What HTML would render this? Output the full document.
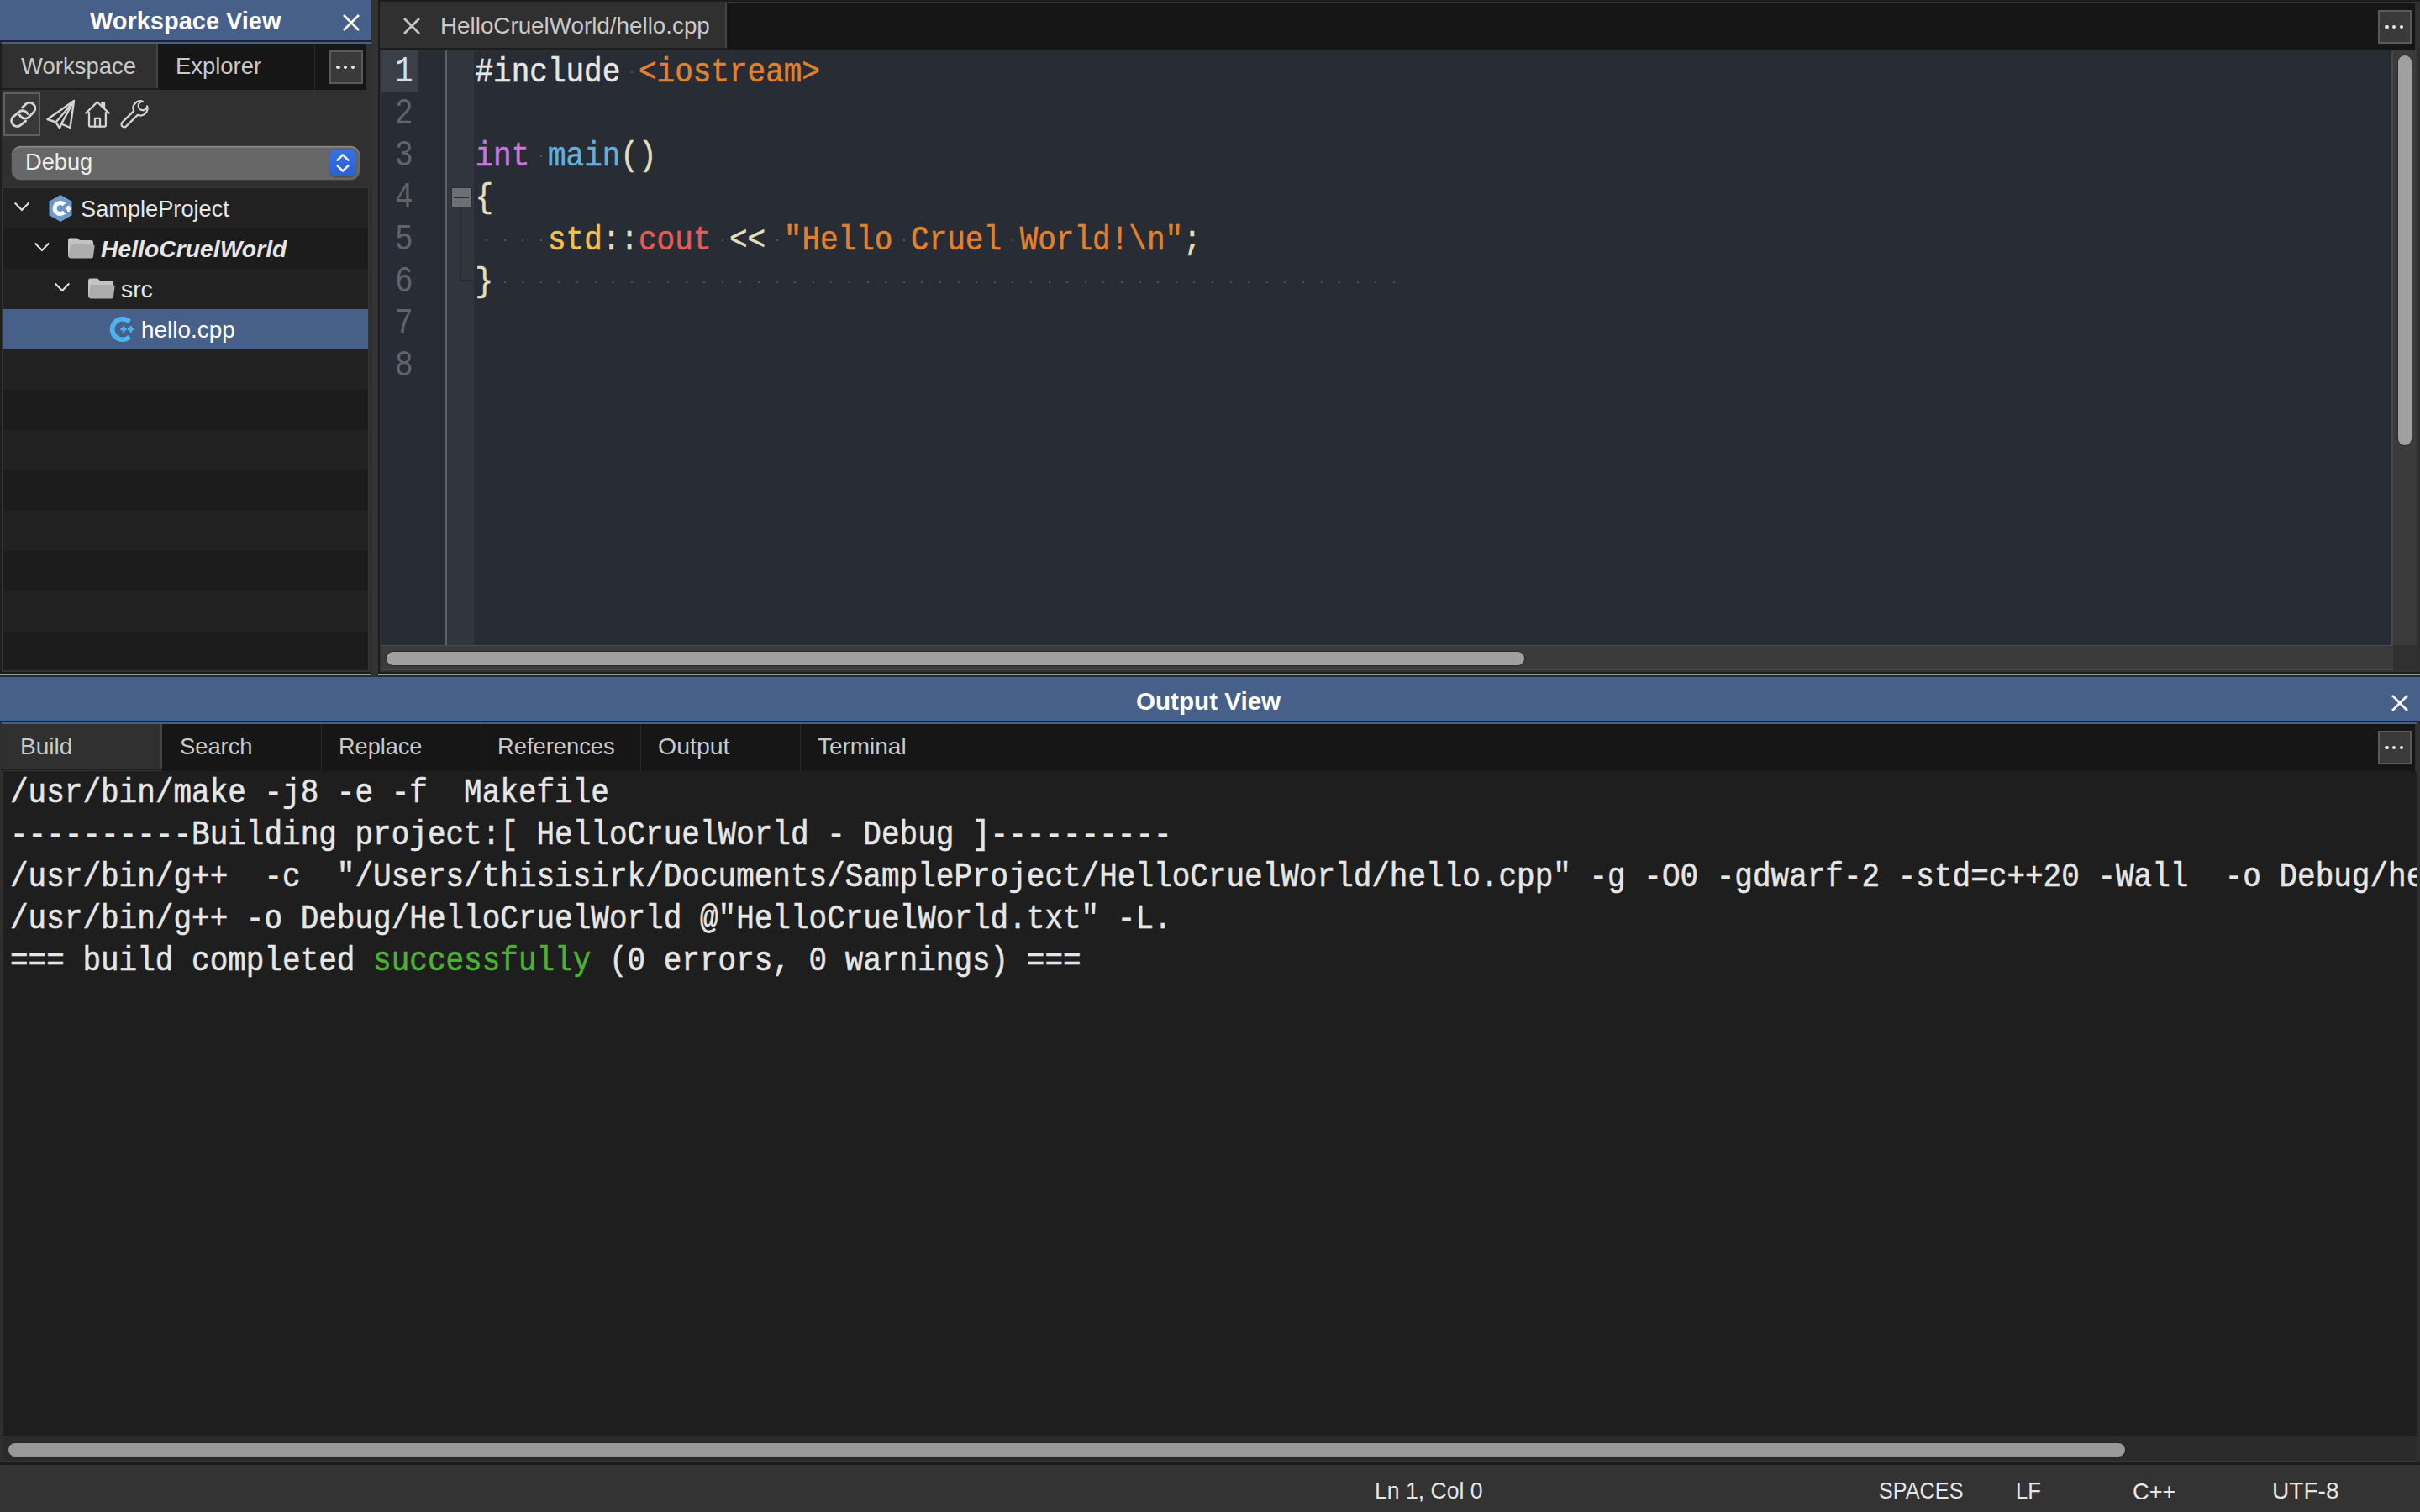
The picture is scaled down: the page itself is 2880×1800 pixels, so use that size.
<!DOCTYPE html>
<html><head><meta charset="utf-8">
<style>
*{margin:0;padding:0;box-sizing:border-box}
html,body{width:2880px;height:1800px;overflow:hidden;background:#2f2f2f;font-family:"Liberation Sans",sans-serif}
.a{position:absolute}
.ui{font-family:"Liberation Sans",sans-serif;white-space:pre;line-height:1}
.mono{font-family:"Liberation Mono",monospace;white-space:pre}
.mono>div{transform:scaleY(1.15);transform-origin:0 34px;-webkit-text-stroke:0.5px currentColor}
.lnum{transform:scaleY(1.24);transform-origin:0 34px}
.hdr{background:#46608a}
.title{color:#fff;font-weight:bold;font-size:29.5px}
.tabtxt{color:#c9c9c9;font-size:26.5px}
.more{background:#3a3a3a;border:2px solid #5a5a5a}
.more i{position:absolute;top:15.8px;width:4.6px;height:4.6px;border-radius:50%;background:#e8e8e8}
</style></head><body>

<!-- ============ LEFT PANE ============ -->
<div class="a" style="left:0;top:0;width:442px;height:802px;background:#303030"></div>
<div class="a hdr" style="left:0;top:0;width:442px;height:48px"></div>
<div class="a ui title" id="t_wsview" style="font-size:30px;left:107.0px;top:9.9px;transform:scaleX(0.9653);transform-origin:0 0">Workspace View</div>
<svg class="a" style="left:406px;top:15px" width="24" height="24"><path d="M3 3L21 21M21 3L3 21" stroke="#fff" stroke-width="2.6"/></svg>
<div class="a" style="left:0;top:48px;width:442px;height:2px;background:#1b2333"></div>
<div class="a" style="left:2px;top:50px;width:440px;height:2px;background:#46608a"></div>
<div class="a" style="left:0;top:52px;width:2px;height:750px;background:#1e1e1e"></div>
<!-- tabs -->
<div class="a" style="left:2px;top:52px;width:434px;height:55px;background:#161616"></div>
<div class="a" style="left:2px;top:52px;width:186px;height:53px;background:#303030;border-right:2px solid #444"></div>
<div class="a" style="left:4px;top:105px;width:186px;height:2px;background:#1e1e1e"></div>
<div class="a ui tabtxt" id="t_wstab" style="font-size:28px;left:24.5px;top:65.0px;transform:scaleX(0.9819);transform-origin:0 0">Workspace</div>
<div class="a ui tabtxt" id="t_explorer" style="font-size:28px;left:209.0px;top:65.0px;transform:scaleX(0.9797);transform-origin:0 0">Explorer</div>
<div class="a" style="left:374px;top:52px;width:1px;height:55px;background:#2a2a2a"></div>
<div class="a more" style="left:392px;top:60px;width:40px;height:40px"><i style="left:6px"></i><i style="left:14.8px"></i><i style="left:23.7px"></i></div>
<!-- toolbar -->
<div class="a" style="left:4px;top:110px;width:44px;height:52px;background:#383838;border:2px solid #5f5f5f"></div>
<svg class="a" style="left:8px;top:116px" width="180" height="40" viewBox="0 0 180 40" fill="none" stroke="#d4d4d4" stroke-width="2.4" stroke-linecap="round" stroke-linejoin="round">
<!-- link -->
<g transform="translate(-8,-16) scale(0.046296)" stroke-width="62">
<path d="M577 604L668 513A145 145 0 0 1 872 717L742 847A145 145 0 0 1 505 797"/>
<path d="M660 951L532 1057A145 145 0 0 1 328 853L478 728A145 145 0 0 1 710 765"/>
</g>
<!-- paper plane -->
<g transform="translate(48,4)">
<path d="M32 0L0.5 22L10.5 25.5L15 32.5L17 27.5L27.5 32Z"/>
<path d="M31.5 1L10.5 25.5M31.5 1L17 27.5"/>
</g>
<!-- house -->
<g transform="translate(93,4)" stroke-width="2.3">
<path d="M1.3 14.6L14.8 1.5L28.6 14.6"/>
<path d="M5 14.2V28.7A2 2 0 0 0 7 30.7H22.9A2 2 0 0 0 24.9 28.7V14.2"/>
<path d="M12 30.7V20.8H18V30.7"/>
<path d="M20.4 4.8V2.1H23V7.5"/>
</g>
<!-- wrench -->
<g transform="translate(137,4)" stroke-width="2.2">
<path d="M14.2 12.15A8.5 8.5 0 0 1 24.9 0.8A5.2 5.2 0 1 0 30.1 6.4A8.5 8.5 0 0 1 18.8 16.85L5.1 30.35A3.3 3.3 0 0 1 0.5 25.6Z"/>
</g>
</svg>

<!-- combo -->
<div class="a" style="left:14px;top:174px;width:414px;height:40px;border-radius:11px;background:#676767;box-shadow:inset 0 1.5px 0 #8a8a8a,0 0 0 0.5px #4a4a4a"></div>
<div class="a ui" id="t_debug" style="font-size:28px;left:29.7px;top:179.4px;color:#ececec;transform:scaleX(0.9723);transform-origin:0 0">Debug</div>
<div class="a" style="left:392px;top:178px;width:32px;height:32px;border-radius:8px;background:linear-gradient(#3672e6,#2b60cf);box-shadow:0 0.5px 1.5px rgba(0,0,0,0.35)"></div>
<svg class="a" style="left:392px;top:178px" width="32" height="32"><path d="M9.6 12.6L16 6.4L22.4 12.6M9.6 19.4L16 25.6L22.4 19.4" fill="none" stroke="#eef2ff" stroke-width="2.6" stroke-linecap="round" stroke-linejoin="round"/></svg>

<!-- tree -->
<div class="a" style="left:2px;top:222px;width:440px;height:580px;background:#2b2b2b"></div>
<div class="a" style="left:2px;top:222px;width:438px;height:578px;background:#333"></div>
<div class="a" id="tree" style="left:4px;top:224px;width:434px;height:574px;background:#1d1d1d;overflow:hidden">
<div class="a" style="left:0;top:0;width:434px;height:48px;background:#212121"></div>
<div class="a" style="left:0;top:48px;width:434px;height:48px;background:#1c1c1c"></div>
<div class="a" style="left:0;top:96px;width:434px;height:48px;background:#212121"></div>
<div class="a" style="left:0;top:144px;width:434px;height:48px;background:#46608a"></div>
<div class="a" style="left:0;top:192px;width:434px;height:48px;background:#212121"></div>
<div class="a" style="left:0;top:240px;width:434px;height:48px;background:#1c1c1c"></div>
<div class="a" style="left:0;top:288px;width:434px;height:48px;background:#212121"></div>
<div class="a" style="left:0;top:336px;width:434px;height:48px;background:#1c1c1c"></div>
<div class="a" style="left:0;top:384px;width:434px;height:48px;background:#212121"></div>
<div class="a" style="left:0;top:432px;width:434px;height:48px;background:#1c1c1c"></div>
<div class="a" style="left:0;top:480px;width:434px;height:48px;background:#212121"></div>
<div class="a" style="left:0;top:528px;width:434px;height:48px;background:#1c1c1c"></div>
<!-- row0 SampleProject -->
<svg class="a" style="left:11px;top:15px" width="22" height="14"><path d="M2.7 2.5L11 11L19.3 2.5" fill="none" stroke="#e0e0e0" stroke-width="2.1"/></svg>
<svg class="a" style="left:53px;top:7px" width="30" height="34" viewBox="0 0 30 34">
<path d="M15 1L28.5 8.8V25.2L15 33L1.5 25.2V8.8Z" fill="#6f9bd3"/>
<path d="M1.5 25.2L28.5 8.8" stroke="#5a86be" stroke-width="0.8"/>
<path d="M1.5 8.8L28.5 25.2" stroke="#5a86be" stroke-width="0.8"/>
<path d="M19.5 12.5A6.6 6.6 0 1 0 19.5 21.5" fill="none" stroke="#fff" stroke-width="5"/>
<path d="M24.5 14V21M21 17.5H28" stroke="#fff" stroke-width="2.6"/>
</svg>
<div class="a ui" id="t_sample" style="font-size:28px;left:92.3px;top:11.4px;color:#e6e6e6;transform:scaleX(0.9713);transform-origin:0 0">SampleProject</div>
<!-- row1 HelloCruelWorld -->
<svg class="a" style="left:35px;top:63px" width="22" height="14"><path d="M2.7 2.5L11 11L19.3 2.5" fill="none" stroke="#e0e0e0" stroke-width="2.1"/></svg>
<svg class="a" style="left:76px;top:59px" width="33" height="26" viewBox="0 0 33 26">
<path d="M3 0.5H12L15 3H28A3 3 0 0 1 31 6V21A3 3 0 0 1 28 24H4A3 3 0 0 1 1 21V3A2.5 2.5 0 0 1 3 0.5Z" fill="#c4c4c4"/>
<path d="M6 8H30A2.5 2.5 0 0 1 32.5 10.8L31 22A2.5 2.5 0 0 1 28.5 24.5H4A2.5 2.5 0 0 1 1.6 22L3.5 10.5A2.5 2.5 0 0 1 6 8Z" fill="#adadad"/>
</svg>
<div class="a ui" id="t_hcw" style="font-size:28.5px;left:115.8px;top:58.4px;color:#e6e6e6;font-weight:bold;font-style:italic;transform:scaleX(0.9937);transform-origin:0 0">HelloCruelWorld</div>
<!-- row2 src -->
<svg class="a" style="left:59px;top:111px" width="22" height="14"><path d="M2.7 2.5L11 11L19.3 2.5" fill="none" stroke="#e0e0e0" stroke-width="2.1"/></svg>
<svg class="a" style="left:100px;top:107px" width="33" height="26" viewBox="0 0 33 26">
<path d="M3 0.5H12L15 3H28A3 3 0 0 1 31 6V21A3 3 0 0 1 28 24H4A3 3 0 0 1 1 21V3A2.5 2.5 0 0 1 3 0.5Z" fill="#c4c4c4"/>
<path d="M6 8H30A2.5 2.5 0 0 1 32.5 10.8L31 22A2.5 2.5 0 0 1 28.5 24.5H4A2.5 2.5 0 0 1 1.6 22L3.5 10.5A2.5 2.5 0 0 1 6 8Z" fill="#adadad"/>
</svg>
<div class="a ui" id="t_src" style="font-size:28px;left:140.0px;top:107.4px;color:#e6e6e6;transform:scaleX(1.0123);transform-origin:0 0">src</div>
<!-- row3 hello.cpp -->
<svg class="a" style="left:126px;top:152px;overflow:visible" width="32" height="32" viewBox="0 0 32 32">
<path d="M24.25 7.04A12.25 12.25 0 1 0 24.25 24.96" fill="none" stroke="#4fb3ee" stroke-width="5.7"/>
<path d="M13.4 16H20.9M17.15 12.25V19.75M22.05 16H29.55M25.8 12.25V19.75" stroke="#4fb3ee" stroke-width="2.6"/>
</svg>
<div class="a ui" id="t_hello" style="font-size:28px;left:163.6px;top:155.4px;color:#ffffff;transform:scaleX(0.9972);transform-origin:0 0">hello.cpp</div>
</div>
<div class="a" style="left:0;top:800px;width:442px;height:2px;background:#1c1c1c"></div>
<div class="a" style="left:0;top:802px;width:442px;height:2px;background:#9a9a9a"></div>

<!-- ============ EDITOR PANE ============ -->
<div class="a" style="left:442px;top:0;width:8px;height:802px;background:#333"></div>
<div class="a" style="left:450px;top:0;width:2430px;height:802px;background:#1c1c1c"></div>
<div class="a" style="left:452px;top:2px;width:2428px;height:798px;background:#333"></div>
<div class="a" style="left:452px;top:4px;width:2422px;height:56px;background:#161616"></div>
<div class="a" style="left:452px;top:2px;width:2428px;height:2px;background:#333"></div>
<div class="a" style="left:452px;top:3px;width:413px;height:54px;background:#303030;border-right:2px solid #444"></div>
<div class="a" style="left:454px;top:57px;width:411px;height:2px;background:#1e1e1e"></div>
<svg class="a" style="left:478px;top:19px" width="24" height="24"><path d="M3 3L21 21M21 3L3 21" stroke="#c4c4c4" stroke-width="2.8"/></svg>
<div class="a ui tabtxt" id="t_edtab" style="font-size:28px;left:523.8px;top:16.7px;transform:scaleX(0.9926);transform-origin:0 0">HelloCruelWorld/hello.cpp</div>
<div class="a more" style="left:2830px;top:12px;width:40px;height:40px"><i style="left:6px"></i><i style="left:14.8px"></i><i style="left:23.7px"></i></div>
<div class="a" style="left:2874px;top:4px;width:6px;height:798px;background:#2f2f2f"></div>

<!-- editor body -->
<div class="a" style="left:454px;top:60px;width:2392px;height:708px;background:#282c34"></div>
<div class="a" style="left:454px;top:60px;width:44px;height:50px;background:#3b3f48"></div>
<div class="a" style="left:530px;top:60px;width:2px;height:708px;background:#5b5f67"></div>
<div class="a" style="left:532px;top:60px;width:32px;height:708px;background:#31353d"></div>
<div id="code"><div class="a mono" style="left:565.5px;top:63px;font-size:36px;line-height:50px"><div style="height:50px"><span style="color:#e6e6e6">#include </span><span style="color:#e0812f">&lt;iostream&gt;</span></div><div style="height:50px"></div><div style="height:50px"><span style="color:#c678dd">int </span><span style="color:#64afd9">main</span><span style="color:#e5dfb8">()</span></div><div style="height:50px"><span style="color:#e5dfb8">{</span></div><div style="height:50px"><span style="color:#e6e6e6">    </span><span style="color:#f3c04f">std</span><span style="color:#e5dfb8">::</span><span style="color:#e45c57">cout</span><span style="color:#e6e6e6"> </span><span style="color:#e5dfb8">&lt;&lt;</span><span style="color:#e6e6e6"> </span><span style="color:#e0812f">"Hello Cruel World!\n"</span><span style="color:#e5dfb8">;</span></div><div style="height:50px"><span style="color:#e5dfb8">}</span></div><div style="height:50px"></div><div style="height:50px"></div>
</div>
<i class="a" style="left:750.8px;top:85px;width:2px;height:2px;background:#50545c"></i><i class="a" style="left:642.8px;top:185px;width:2px;height:2px;background:#50545c"></i><i class="a" style="left:578.0px;top:285px;width:2px;height:2px;background:#50545c"></i><i class="a" style="left:599.6px;top:285px;width:2px;height:2px;background:#50545c"></i><i class="a" style="left:621.2px;top:285px;width:2px;height:2px;background:#50545c"></i><i class="a" style="left:642.8px;top:285px;width:2px;height:2px;background:#50545c"></i><i class="a" style="left:858.8px;top:285px;width:2px;height:2px;background:#50545c"></i><i class="a" style="left:923.6px;top:285px;width:2px;height:2px;background:#50545c"></i><i class="a" style="left:1074.8px;top:285px;width:2px;height:2px;background:#50545c"></i><i class="a" style="left:1204.4px;top:285px;width:2px;height:2px;background:#50545c"></i><i class="a" style="left:599.6px;top:335px;width:2px;height:2px;background:#50545c"></i><i class="a" style="left:621.2px;top:335px;width:2px;height:2px;background:#50545c"></i><i class="a" style="left:642.8px;top:335px;width:2px;height:2px;background:#50545c"></i><i class="a" style="left:664.4px;top:335px;width:2px;height:2px;background:#50545c"></i><i class="a" style="left:686.0px;top:335px;width:2px;height:2px;background:#50545c"></i><i class="a" style="left:707.6px;top:335px;width:2px;height:2px;background:#50545c"></i><i class="a" style="left:729.2px;top:335px;width:2px;height:2px;background:#50545c"></i><i class="a" style="left:750.8px;top:335px;width:2px;height:2px;background:#50545c"></i><i class="a" style="left:772.4px;top:335px;width:2px;height:2px;background:#50545c"></i><i class="a" style="left:794.0px;top:335px;width:2px;height:2px;background:#50545c"></i><i class="a" style="left:815.6px;top:335px;width:2px;height:2px;background:#50545c"></i><i class="a" style="left:837.2px;top:335px;width:2px;height:2px;background:#50545c"></i><i class="a" style="left:858.8px;top:335px;width:2px;height:2px;background:#50545c"></i><i class="a" style="left:880.4px;top:335px;width:2px;height:2px;background:#50545c"></i><i class="a" style="left:902.0px;top:335px;width:2px;height:2px;background:#50545c"></i><i class="a" style="left:923.6px;top:335px;width:2px;height:2px;background:#50545c"></i><i class="a" style="left:945.2px;top:335px;width:2px;height:2px;background:#50545c"></i><i class="a" style="left:966.8px;top:335px;width:2px;height:2px;background:#50545c"></i><i class="a" style="left:988.4px;top:335px;width:2px;height:2px;background:#50545c"></i><i class="a" style="left:1010.0px;top:335px;width:2px;height:2px;background:#50545c"></i><i class="a" style="left:1031.6px;top:335px;width:2px;height:2px;background:#50545c"></i><i class="a" style="left:1053.2px;top:335px;width:2px;height:2px;background:#50545c"></i><i class="a" style="left:1074.8px;top:335px;width:2px;height:2px;background:#50545c"></i><i class="a" style="left:1096.4px;top:335px;width:2px;height:2px;background:#50545c"></i><i class="a" style="left:1118.0px;top:335px;width:2px;height:2px;background:#50545c"></i><i class="a" style="left:1139.6px;top:335px;width:2px;height:2px;background:#50545c"></i><i class="a" style="left:1161.2px;top:335px;width:2px;height:2px;background:#50545c"></i><i class="a" style="left:1182.8px;top:335px;width:2px;height:2px;background:#50545c"></i><i class="a" style="left:1204.4px;top:335px;width:2px;height:2px;background:#50545c"></i><i class="a" style="left:1226.0px;top:335px;width:2px;height:2px;background:#50545c"></i><i class="a" style="left:1247.6px;top:335px;width:2px;height:2px;background:#50545c"></i><i class="a" style="left:1269.2px;top:335px;width:2px;height:2px;background:#50545c"></i><i class="a" style="left:1290.8px;top:335px;width:2px;height:2px;background:#50545c"></i><i class="a" style="left:1312.4px;top:335px;width:2px;height:2px;background:#50545c"></i><i class="a" style="left:1334.0px;top:335px;width:2px;height:2px;background:#50545c"></i><i class="a" style="left:1355.6px;top:335px;width:2px;height:2px;background:#50545c"></i><i class="a" style="left:1377.2px;top:335px;width:2px;height:2px;background:#50545c"></i><i class="a" style="left:1398.8px;top:335px;width:2px;height:2px;background:#50545c"></i><i class="a" style="left:1420.4px;top:335px;width:2px;height:2px;background:#50545c"></i><i class="a" style="left:1442.0px;top:335px;width:2px;height:2px;background:#50545c"></i><i class="a" style="left:1463.6px;top:335px;width:2px;height:2px;background:#50545c"></i><i class="a" style="left:1485.2px;top:335px;width:2px;height:2px;background:#50545c"></i><i class="a" style="left:1506.8px;top:335px;width:2px;height:2px;background:#50545c"></i><i class="a" style="left:1528.4px;top:335px;width:2px;height:2px;background:#50545c"></i><i class="a" style="left:1550.0px;top:335px;width:2px;height:2px;background:#50545c"></i><i class="a" style="left:1571.6px;top:335px;width:2px;height:2px;background:#50545c"></i><i class="a" style="left:1593.2px;top:335px;width:2px;height:2px;background:#50545c"></i><i class="a" style="left:1614.8px;top:335px;width:2px;height:2px;background:#50545c"></i><i class="a" style="left:1636.4px;top:335px;width:2px;height:2px;background:#50545c"></i><i class="a" style="left:1658.0px;top:335px;width:2px;height:2px;background:#50545c"></i>
<div class="a mono lnum" style="left:470px;top:63px;font-size:36px;line-height:50px;color:#dcdcdc">1</div><div class="a mono lnum" style="left:470px;top:113px;font-size:36px;line-height:50px;color:#5f636b">2</div><div class="a mono lnum" style="left:470px;top:163px;font-size:36px;line-height:50px;color:#5f636b">3</div><div class="a mono lnum" style="left:470px;top:213px;font-size:36px;line-height:50px;color:#5f636b">4</div><div class="a mono lnum" style="left:470px;top:263px;font-size:36px;line-height:50px;color:#5f636b">5</div><div class="a mono lnum" style="left:470px;top:313px;font-size:36px;line-height:50px;color:#5f636b">6</div><div class="a mono lnum" style="left:470px;top:363px;font-size:36px;line-height:50px;color:#5f636b">7</div><div class="a mono lnum" style="left:470px;top:413px;font-size:36px;line-height:50px;color:#5f636b">8</div>
<div class="a" style="left:536.5px;top:222.5px;width:25px;height:24.5px;background:#6d6f75;border:1.3px solid #2a2d33"></div>
<div class="a" style="left:540px;top:233.8px;width:18px;height:2.2px;background:#26292e"></div>
<div class="a" style="left:547px;top:247px;width:2px;height:88px;background:#26292e"></div>
<div class="a" style="left:547px;top:333px;width:16px;height:2px;background:#26292e"></div></div>

<!-- scrollbars -->
<div class="a" style="left:2846px;top:60px;width:30px;height:708px;background:#3b3b3b;border-left:2px solid #474747"></div>
<div class="a" style="left:2854px;top:66px;width:16px;height:464px;border-radius:8px;background:#a0a0a0;box-shadow:0 0 0 1px #2c2c2c"></div>
<div class="a" style="left:454px;top:768px;width:2394px;height:30px;background:#3b3b3b;border-top:1px solid #4a4a4a;border-bottom:1px solid #474747"></div>
<div class="a" style="left:460px;top:776px;width:1354px;height:16px;border-radius:8px;background:#a0a0a0;box-shadow:0 0 0 1px #2c2c2c"></div>
<div class="a" style="left:2848px;top:768px;width:28px;height:32px;background:#303030"></div>
<div class="a" style="left:452px;top:798px;width:2428px;height:2px;background:#333"></div>
<div class="a" style="left:450px;top:800px;width:2430px;height:2px;background:#1e1e1e"></div>
<div class="a" style="left:450px;top:802px;width:2430px;height:2px;background:#9a9a9a"></div>
<div class="a" style="left:0;top:804px;width:442px;height:2px;background:#2a2a2a"></div>
<div class="a" style="left:450px;top:804px;width:2430px;height:2px;background:#2a2a2a"></div>

<!-- ============ OUTPUT PANE ============ -->
<div class="a hdr" style="left:0;top:806px;width:2880px;height:52px"></div>
<div class="a ui title" id="t_outview" style="font-size:30px;left:1351.6px;top:820.4px;transform:scaleX(0.9868);transform-origin:0 0">Output View</div>
<svg class="a" style="left:2844px;top:825px" width="24" height="24"><path d="M3 3L21 21M21 3L3 21" stroke="#fff" stroke-width="2.6"/></svg>
<div class="a" style="left:0;top:858px;width:2880px;height:2px;background:#1b2333"></div>
<div class="a" style="left:2px;top:860px;width:2874px;height:2px;background:#46608a"></div>
<div class="a" style="left:0;top:862px;width:2880px;height:882px;background:#2f2f2f"></div>
<div class="a" style="left:2px;top:862px;width:2872px;height:56px;background:#161616"></div>
<div class="a" style="left:2px;top:862px;width:191px;height:53px;background:#303030;border-right:2px solid #444"></div>
<div class="a" style="left:4px;top:915px;width:189px;height:1.5px;background:#1c1c1c"></div>
<div class="a" style="left:4px;top:916.5px;width:189px;height:1.5px;background:#343434"></div>
<div class="a ui tabtxt" id="t_build" style="font-size:28px;left:23.5px;top:875.3px;transform:scaleX(1.0019);transform-origin:0 0">Build</div>
<div class="a ui tabtxt" id="t_search" style="font-size:28px;left:213.5px;top:875.3px;transform:scaleX(0.9757);transform-origin:0 0">Search</div>
<div class="a ui tabtxt" id="t_replace" style="font-size:28px;left:402.7px;top:875.3px;transform:scaleX(0.9680);transform-origin:0 0">Replace</div>
<div class="a ui tabtxt" id="t_refs" style="font-size:28px;left:592.0px;top:875.3px;transform:scaleX(0.9758);transform-origin:0 0">References</div>
<div class="a ui tabtxt" id="t_output" style="font-size:28px;left:783.1px;top:875.3px;transform:scaleX(1.0169);transform-origin:0 0">Output</div>
<div class="a ui tabtxt" id="t_terminal" style="font-size:28px;left:973.2px;top:875.3px;transform:scaleX(0.9982);transform-origin:0 0">Terminal</div>
<div class="a" style="left:382px;top:862px;width:1px;height:56px;background:#2a2a2a"></div>
<div class="a" style="left:572px;top:862px;width:1px;height:56px;background:#2a2a2a"></div>
<div class="a" style="left:762px;top:862px;width:1px;height:56px;background:#2a2a2a"></div>
<div class="a" style="left:952px;top:862px;width:1px;height:56px;background:#2a2a2a"></div>
<div class="a" style="left:1142px;top:862px;width:1px;height:56px;background:#2a2a2a"></div>
<div class="a more" style="left:2830px;top:870px;width:40px;height:40px"><i style="left:6px"></i><i style="left:14.8px"></i><i style="left:23.7px"></i></div>

<div class="a" style="left:4px;top:918px;width:2872px;height:792px;background:#1e1e1e"></div>
<div id="out"><div class="a" style="left:4px;top:918px;width:2872px;height:792px;overflow:hidden"><div class="a mono" style="left:8px;top:3px;font-size:36px;line-height:50px;color:#e6e6e6"><div style="height:50px">/usr/bin/make -j8 -e -f  Makefile</div><div style="height:50px">----------Building project:[ HelloCruelWorld - Debug ]----------</div><div style="height:50px">/usr/bin/g++  -c  "/Users/thisisirk/Documents/SampleProject/HelloCruelWorld/hello.cpp" -g -O0 -gdwarf-2 -std=c++20 -Wall  -o Debug/hello.cpp.o -I. -I.</div><div style="height:50px">/usr/bin/g++ -o Debug/HelloCruelWorld @"HelloCruelWorld.txt" -L.</div><div style="height:50px">=== build completed <span style="color:#4db234">successfully</span> (0 errors, 0 warnings) ===</div></div></div></div>
<div class="a" style="left:4px;top:1709px;width:2872px;height:31px;background:#2b2b2b;border-top:1.5px solid #363636;border-bottom:1.5px solid #363636"></div>
<div class="a" style="left:10px;top:1718px;width:2518.5px;height:16px;border-radius:8px;background:#999;box-shadow:0 0 0 1px #262626"></div>
<div class="a" style="left:0;top:1740.5px;width:2880px;height:3.5px;background:#1c1c1c"></div>

<!-- status bar -->
<div class="a" style="left:0;top:1744px;width:2880px;height:56px;background:#333"></div>
<div class="a ui" id="t_ln" style="font-size:28px;left:1636.0px;top:1761.1px;color:#e6e6e6;transform:scaleX(0.9494);transform-origin:0 0">Ln 1, Col 0</div>
<div class="a ui" id="t_spaces" style="font-size:28px;left:2235.7px;top:1761.4px;color:#e6e6e6;transform:scaleX(0.9013);transform-origin:0 0">SPACES</div>
<div class="a ui" id="t_lf" style="font-size:28px;left:2399.1px;top:1761.4px;color:#e6e6e6;transform:scaleX(0.9154);transform-origin:0 0">LF</div>
<div class="a ui" id="t_cpp" style="font-size:28px;left:2537.6px;top:1762.4px;color:#e6e6e6;transform:scaleX(0.9728);transform-origin:0 0">C++</div>
<div class="a ui" id="t_utf" style="font-size:28px;left:2703.8px;top:1761.4px;color:#e6e6e6;transform:scaleX(1.0031);transform-origin:0 0">UTF-8</div>

</body></html>
